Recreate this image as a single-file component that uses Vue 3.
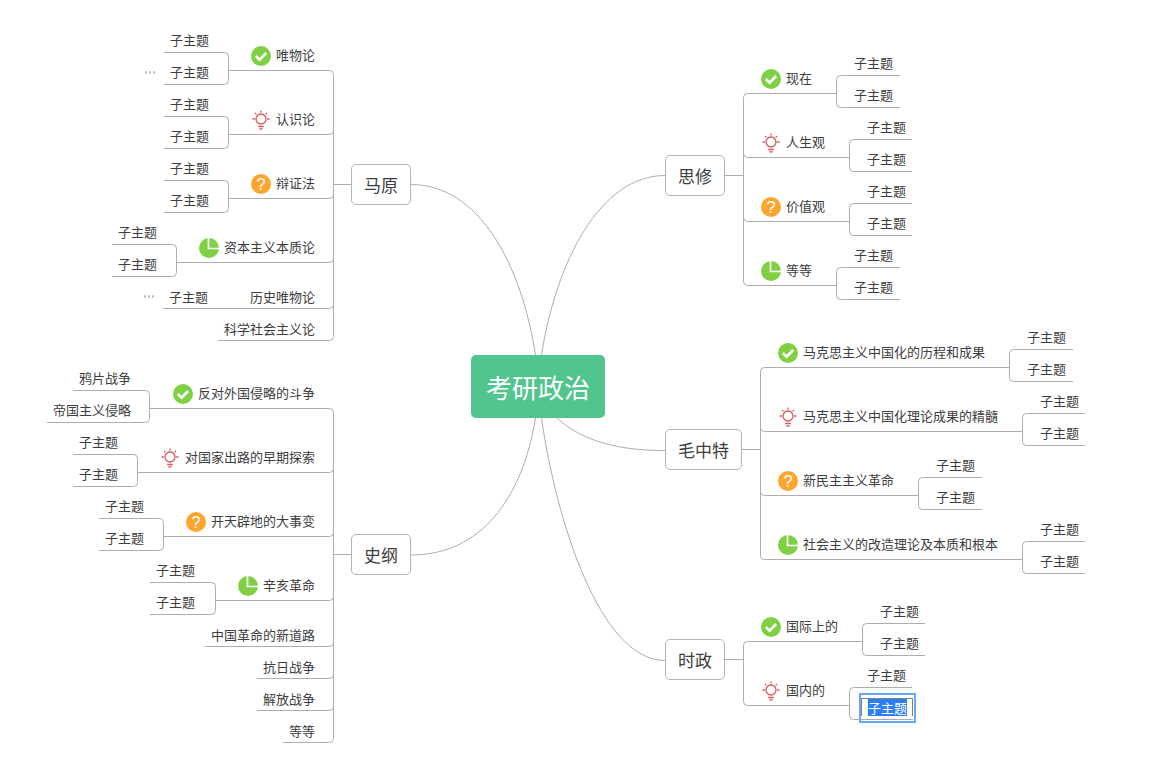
<script setup>
const W = 1163
const H = 766

const topics = [
  { label: '马原', x: 351, y: 164, w: 60, h: 41 },
  { label: '史纲', x: 351, y: 534, w: 60, h: 41 },
  { label: '思修', x: 665, y: 155, w: 60, h: 41 },
  { label: '毛中特', x: 665, y: 429, w: 77, h: 41 },
  { label: '时政', x: 665, y: 639, w: 60, h: 41 }
]

const curves = [
  'M411 184.5 C 478 184.5 521 262 535.5 355',
  'M411 555 C 480 555 522 500 535.5 418',
  'M665 175.5 C 600 175.5 556 262 541.5 355',
  'M665 450.5 C 618 450.5 582 441 557 418',
  'M665 660.5 C 600 660.5 556 520 541.5 418'
]

// side: -1 children go left, 1 children go right
const groups = [
  {
    side: -1, spine: 333.5, jointY: 184.5, jointTo: 351,
    items: [
      { y: 70.5, label: '唯物论', x: 276, cy: 55, icon: 'check', ix: 261, bx: 228.5, kids: [{ t: '子主题', x: 170, l: 164 }, { t: '子主题', x: 170, l: 164 }] },
      { y: 134.5, label: '认识论', x: 276, cy: 119, icon: 'bulb', ix: 261, bx: 228.5, kids: [{ t: '子主题', x: 170, l: 164 }, { t: '子主题', x: 170, l: 164 }] },
      { y: 198.5, label: '辩证法', x: 276, cy: 183, icon: 'question', ix: 261, bx: 228.5, kids: [{ t: '子主题', x: 170, l: 164 }, { t: '子主题', x: 170, l: 164 }] },
      { y: 262.5, label: '资本主义本质论', x: 224, cy: 247, icon: 'pie', ix: 209, bx: 176.5, kids: [{ t: '子主题', x: 118, l: 112 }, { t: '子主题', x: 118, l: 112 }] },
      { y: 308.5, label: '历史唯物论', x: 250, cy: 297, from: 163 },
      { y: 340.5, label: '科学社会主义论', x: 224, cy: 329, from: 218 }
    ]
  },
  {
    side: -1, spine: 333.5, jointY: 554.5, jointTo: 351,
    items: [
      { y: 408.5, label: '反对外国侵略的斗争', x: 198, cy: 393, icon: 'check', ix: 183, bx: 149.5, kids: [{ t: '鸦片战争', x: 79, l: 73 }, { t: '帝国主义侵略', x: 53, l: 47 }] },
      { y: 472.5, label: '对国家出路的早期探索', x: 185, cy: 457, icon: 'bulb', ix: 170, bx: 137.5, kids: [{ t: '子主题', x: 79, l: 73 }, { t: '子主题', x: 79, l: 73 }] },
      { y: 536.5, label: '开天辟地的大事变', x: 211, cy: 521, icon: 'question', ix: 196, bx: 163.5, kids: [{ t: '子主题', x: 105, l: 99 }, { t: '子主题', x: 105, l: 99 }] },
      { y: 600.5, label: '辛亥革命', x: 263, cy: 585, icon: 'pie', ix: 248, bx: 215.5, kids: [{ t: '子主题', x: 156, l: 150 }, { t: '子主题', x: 156, l: 150 }] },
      { y: 646.5, label: '中国革命的新道路', x: 211, cy: 635, from: 205 },
      { y: 678.5, label: '抗日战争', x: 263, cy: 667, from: 257 },
      { y: 710.5, label: '解放战争', x: 263, cy: 699, from: 257 },
      { y: 742.5, label: '等等', x: 289, cy: 731, from: 283 }
    ]
  },
  {
    side: 1, spine: 743.5, jointY: 175.5, jointTo: 725,
    items: [
      { y: 93.5, label: '现在', x: 786, cy: 78, icon: 'check', ix: 771, bx: 836.5, r: 900, kx: 854 },
      { y: 157.5, label: '人生观', x: 786, cy: 142, icon: 'bulb', ix: 771, bx: 849.5, r: 912, kx: 867 },
      { y: 221.5, label: '价值观', x: 786, cy: 206, icon: 'question', ix: 771, bx: 849.5, r: 912, kx: 867 },
      { y: 285.5, label: '等等', x: 786, cy: 270, icon: 'pie', ix: 771, bx: 836.5, r: 900, kx: 854 }
    ]
  },
  {
    side: 1, spine: 760.5, jointY: 449.5, jointTo: 742,
    items: [
      { y: 367.5, label: '马克思主义中国化的历程和成果', x: 803, cy: 352, icon: 'check', ix: 788, bx: 1009.5, r: 1073, kx: 1027 },
      { y: 431.5, label: '马克思主义中国化理论成果的精髓', x: 803, cy: 416, icon: 'bulb', ix: 788, bx: 1022.5, r: 1085, kx: 1040 },
      { y: 495.5, label: '新民主主义革命', x: 803, cy: 480, icon: 'question', ix: 788, bx: 918.5, r: 982, kx: 936 },
      { y: 559.5, label: '社会主义的改造理论及本质和根本', x: 803, cy: 544, icon: 'pie', ix: 788, bx: 1022.5, r: 1085, kx: 1040 }
    ]
  },
  {
    side: 1, spine: 743.5, jointY: 659.5, jointTo: 725,
    items: [
      { y: 641.5, label: '国际上的', x: 786, cy: 626, icon: 'check', ix: 771, bx: 862.5, r: 925, kx: 880 },
      { y: 705.5, label: '国内的', x: 786, cy: 690, icon: 'bulb', ix: 771, bx: 849.5, r: 912, kx: 867, selected: true }
    ]
  }
]

const paths = []
const labels = []
const icons = []
const R = 4

for (const g of groups) {
  const s = g.side
  const ys = g.items.map((i) => i.y)
  const top = Math.min(...ys)
  const bottom = Math.max(...ys)
  paths.push(`M${g.jointTo} ${g.jointY} H${g.spine}`)
  paths.push(`M${g.spine} ${top + R} V${bottom - R}`)
  g.items.forEach((it) => {
    const isTop = it.y === top
    const end = it.bx ?? it.from
    const startY = isTop ? it.y + R : it.y - R
    paths.push(`M${g.spine} ${startY} Q${g.spine} ${it.y} ${g.spine + s * R} ${it.y} H${end}`)
    labels.push({ t: it.label, x: it.x, top: it.cy - 10 })
    if (it.icon) icons.push({ type: it.icon, x: it.ix - 10, y: it.cy + 1 - 10 })
    if (it.bx !== undefined) {
      const t = it.y - 18
      const b = it.y + 14
      const topA = it.y - 40.5
      const topB = it.y - 8.5
      if (s < 0) {
        const [k1, k2] = it.kids
        paths.push(`M${k1.l} ${t} H${it.bx - R} Q${it.bx} ${t} ${it.bx} ${t + R} V${b - R} Q${it.bx} ${b} ${it.bx - R} ${b} H${k2.l}`)
        labels.push({ t: k1.t, x: k1.x, top: topA })
        labels.push({ t: k2.t, x: k2.x, top: topB })
      } else {
        paths.push(`M${it.r} ${t} H${it.bx + R} Q${it.bx} ${t} ${it.bx} ${t + R} V${b - R} Q${it.bx} ${b} ${it.bx + R} ${b} H${it.r}`)
        labels.push({ t: '子主题', x: it.kx, top: topA })
        if (!it.selected) labels.push({ t: '子主题', x: it.kx, top: topB })
      }
    }
  })
}

labels.push({ t: '子主题', x: 169, top: 287 })

const leaderDots = [
  { x: 145, y: 72, cls: 'dots-green' },
  { x: 144, y: 296, cls: 'dots-red' }
]
</script>

<template>
  <div class="canvas">
    <svg class="lines" :width="W" :height="H" :viewBox="`0 0 ${W} ${H}`">
      <path v-for="(c, i) in curves" :key="'c' + i" :d="c" class="curve" />
      <path v-for="(p, i) in paths" :key="'p' + i" :d="p" class="conn" />
    </svg>

    <div class="central">考研政治</div>

    <div
      v-for="t in topics"
      :key="t.label"
      class="topic"
      :style="{ left: t.x + 'px', top: t.y + 'px', width: t.w + 'px', height: t.h + 'px' }"
    >{{ t.label }}</div>

    <span
      v-for="(l, i) in labels"
      :key="'l' + i"
      class="label"
      :style="{ left: l.x + 'px', top: l.top + 'px' }"
    >{{ l.t }}</span>

    <svg
      v-for="(ic, i) in icons"
      :key="'i' + i"
      class="icon"
      width="20"
      height="20"
      viewBox="0 0 20 20"
      :style="{ left: ic.x + 'px', top: ic.y + 'px' }"
    >
      <template v-if="ic.type === 'check'">
        <circle cx="10" cy="10" r="10" fill="#7fd143" />
        <path d="M4.8 10 L8.6 13.6 L15.2 7" fill="none" stroke="#fff" stroke-width="2.6" />
      </template>
      <template v-else-if="ic.type === 'question'">
        <circle cx="10" cy="10" r="10" fill="#ffa52e" />
        <text x="10" y="16" text-anchor="middle" class="qmark">?</text>
      </template>
      <template v-else-if="ic.type === 'pie'">
        <circle cx="10" cy="10" r="10" fill="#7fd143" />
        <path d="M9.5 0 V10.5 H20" fill="none" stroke="#fff" stroke-width="1.7" />
      </template>
      <template v-else>
        <g fill="none" stroke="#d4585c" stroke-width="1.3">
          <circle cx="10" cy="9" r="5" />
          <path d="M10 0.5 V2.5 M1.5 9 H3.8 M16.2 9 H18.5 M4 3 L5.4 4.4 M16 3 L14.6 4.4" />
          <path d="M7.2 16.5 H12.8 M8.2 18.8 H11.8" />
        </g>
      </template>
    </svg>

    <span
      v-for="d in leaderDots"
      :key="d.x"
      class="dots"
      :class="d.cls"
      :style="{ left: d.x + 'px', top: d.y - 1 + 'px' }"
    ><i></i><i></i><i></i></span>

    <div class="editor">
      <div class="editor-inner"><span class="selected-text">子主题</span></div>
    </div>
  </div>
</template>

<style scoped>
.canvas {
  position: relative;
  width: 1163px;
  height: 766px;
  background: #fff;
  overflow: hidden;
  font-family: "Noto Sans CJK SC", "Liberation Sans", sans-serif;
  color: #3d3d3d;
}
.lines {
  position: absolute;
  left: 0;
  top: 0;
}
.conn,
.curve {
  fill: none;
  stroke: #aeaeae;
  stroke-width: 1;
}
.central {
  position: absolute;
  left: 471px;
  top: 355px;
  width: 134px;
  height: 63px;
  background: #52c48e;
  border-radius: 5px;
  color: #fff;
  font-size: 26px;
  line-height: 63px;
  text-align: center;
}
.topic {
  position: absolute;
  box-sizing: border-box;
  background: #fff;
  border: 1px solid #b4b4b4;
  border-radius: 5px;
  font-size: 17px;
  display: flex;
  align-items: center;
  justify-content: center;
}
.label {
  position: absolute;
  font-size: 13px;
  line-height: 20px;
  white-space: nowrap;
}
.icon {
  position: absolute;
}
.qmark {
  fill: #fff;
  font-size: 17px;
  font-family: "Liberation Sans", sans-serif;
}
.dots {
  position: absolute;
  display: flex;
  gap: 2px;
}
.dots i {
  display: block;
  width: 2px;
  height: 3px;
  border-radius: 1px;
}
.dots-green i {
  background: #b5c6c2;
}
.dots-red i {
  background: #d6b6b6;
}
.editor {
  position: absolute;
  left: 859px;
  top: 693px;
  width: 57px;
  height: 30px;
  box-sizing: border-box;
  border: 2px solid #64a9fb;
  background: #fff;
  padding: 3px 1px 0 0;
}
.editor::after {
  content: "";
  position: absolute;
  left: 0;
  right: 1px;
  top: 24px;
  height: 1px;
  background: #aeaeae;
}
.editor-inner {
  box-sizing: border-box;
  height: 18px;
  border: 1px solid #808080;
  border-bottom: 0;
  padding-left: 6px;
  display: flex;
  align-items: flex-start;
  font-size: 13px;
  line-height: 17px;
}
.selected-text {
  background: #2b80f6;
  color: #fff;
  height: 17px;
  white-space: nowrap;
}
</style>
